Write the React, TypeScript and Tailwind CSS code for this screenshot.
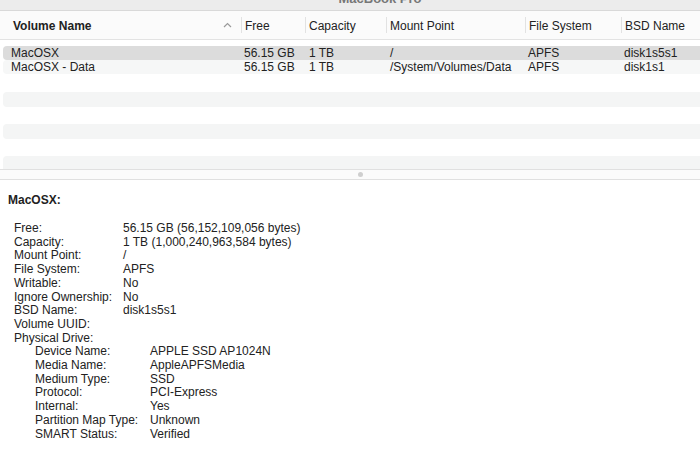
import React from "react";

type Volume = {
  name: string;
  free: string;
  capacity: string;
  mount: string;
  fs: string;
  bsd: string;
};

const volumes: Volume[] = [
  { name: "MacOSX", free: "56.15 GB", capacity: "1 TB", mount: "/", fs: "APFS", bsd: "disk1s5s1" },
  { name: "MacOSX - Data", free: "56.15 GB", capacity: "1 TB", mount: "/System/Volumes/Data", fs: "APFS", bsd: "disk1s1" },
];

const details: [string, string][] = [
  ["Free:", "56.15 GB (56,152,109,056 bytes)"],
  ["Capacity:", "1 TB (1,000,240,963,584 bytes)"],
  ["Mount Point:", "/"],
  ["File System:", "APFS"],
  ["Writable:", "No"],
  ["Ignore Ownership:", "No"],
  ["BSD Name:", "disk1s5s1"],
  ["Volume UUID:", ""],
  ["Physical Drive:", ""],
];

const drive: [string, string][] = [
  ["Device Name:", "APPLE SSD AP1024N"],
  ["Media Name:", "AppleAPFSMedia"],
  ["Medium Type:", "SSD"],
  ["Protocol:", "PCI-Express"],
  ["Internal:", "Yes"],
  ["Partition Map Type:", "Unknown"],
  ["SMART Status:", "Verified"],
];

const cols = "grid grid-cols-[241px_64px_81px_139px_96px_1fr]";
// data rows start 3px in, so the first column is 3px narrower
const rowCols = "grid grid-cols-[238px_64px_81px_139px_96px_1fr]";

function HeaderCell({ label }: { label: string }) {
  return (
    <div className="flex items-center h-full">
      <div className="w-px h-[16px] bg-[#e2e2e2]" />
      <span className="pl-[3px] pt-[2px]">{label}</span>
    </div>
  );
}

export default function App() {
  return (
    <div className="w-[700px] h-[466px] overflow-hidden bg-white text-[12px] text-[#222] font-['Liberation_Sans',Arial,sans-serif]">
      {/* Title bar (cut off) */}
      <div className="h-[11px] overflow-hidden bg-[#ececec] flex justify-center border-b border-[#d9d9d9]">
        <span className="-mt-[8px] pl-[60px] text-[13px] font-semibold leading-[14px] text-[#777]">MacBook Pro</span>
      </div>

      {/* Column header */}
      <div className={`${cols} h-[29px] bg-[#fbfbfb] border-b border-[#e3e3e3]`}>
        <div className="flex items-center justify-between h-full">
          <span className="pl-[13px] pt-[2px] font-bold">Volume Name</span>
          <svg width="9" height="6" viewBox="0 0 9 6" className="mr-[9px]">
            <path d="M1 5 L4.5 1.5 L8 5" fill="none" stroke="#9a9a9a" strokeWidth="1.2" />
          </svg>
        </div>
        <HeaderCell label="Free" />
        <HeaderCell label="Capacity" />
        <HeaderCell label="Mount Point" />
        <HeaderCell label="File System" />
        <HeaderCell label="BSD Name" />
      </div>

      {/* Volume rows */}
      <div className="pt-[6px] h-[129px] flex flex-col">
        {volumes.map((v, i) => (
          <div
            key={v.name}
            className={`${rowCols} h-[14px] leading-[15px] ml-[3px] rounded-l-[4px] ${
              i === 0 ? "bg-[#dcdcdc]" : "bg-[#f6f7f7]"
            }`}
          >
            <span className="pl-[8px]">{v.name}</span>
            <span className="pl-[3px]">{v.free}</span>
            <span className="pl-[4px]">{v.capacity}</span>
            <span className="pl-[4px]">{v.mount}</span>
            <span className="pl-[3px]">{v.fs}</span>
            <span className="pl-[3px]">{v.bsd}</span>
          </div>
        ))}
        <div className="h-[18px]" />
        <div className="h-[15px] ml-[3px] rounded-l-[4px] bg-[#f4f5f5]" />
        <div className="h-[17px]" />
        <div className="h-[15px] ml-[3px] rounded-l-[4px] bg-[#f4f5f5]" />
        <div className="h-[17px]" />
        <div className="flex-1 ml-[3px] rounded-tl-[4px] bg-[#f4f5f5]" />
      </div>

      {/* Splitter */}
      <div className="h-[11px] border-y border-[#e0e0e0] bg-[#fbfbfb] flex items-center justify-center">
        <div className="ml-[20px] w-[5px] h-[5px] rounded-full bg-[#cfcfcf]" />
      </div>

      {/* Detail pane */}
      <div className="pt-[13px] pl-[8px]">
        <div className="font-bold leading-[14px]">MacOSX:</div>
        <div className="mt-[15px] pl-[6px] leading-[13.7px]">
          {details.map(([k, v]) => (
            <div key={k} className="flex">
              <span className="w-[109px] shrink-0">{k}</span>
              <span>{v}</span>
            </div>
          ))}
          <div className="pl-[21px]">
            {drive.map(([k, v]) => (
              <div key={k} className="flex">
                <span className="w-[115px] shrink-0">{k}</span>
                <span>{v}</span>
              </div>
            ))}
          </div>
        </div>
      </div>
    </div>
  );
}
